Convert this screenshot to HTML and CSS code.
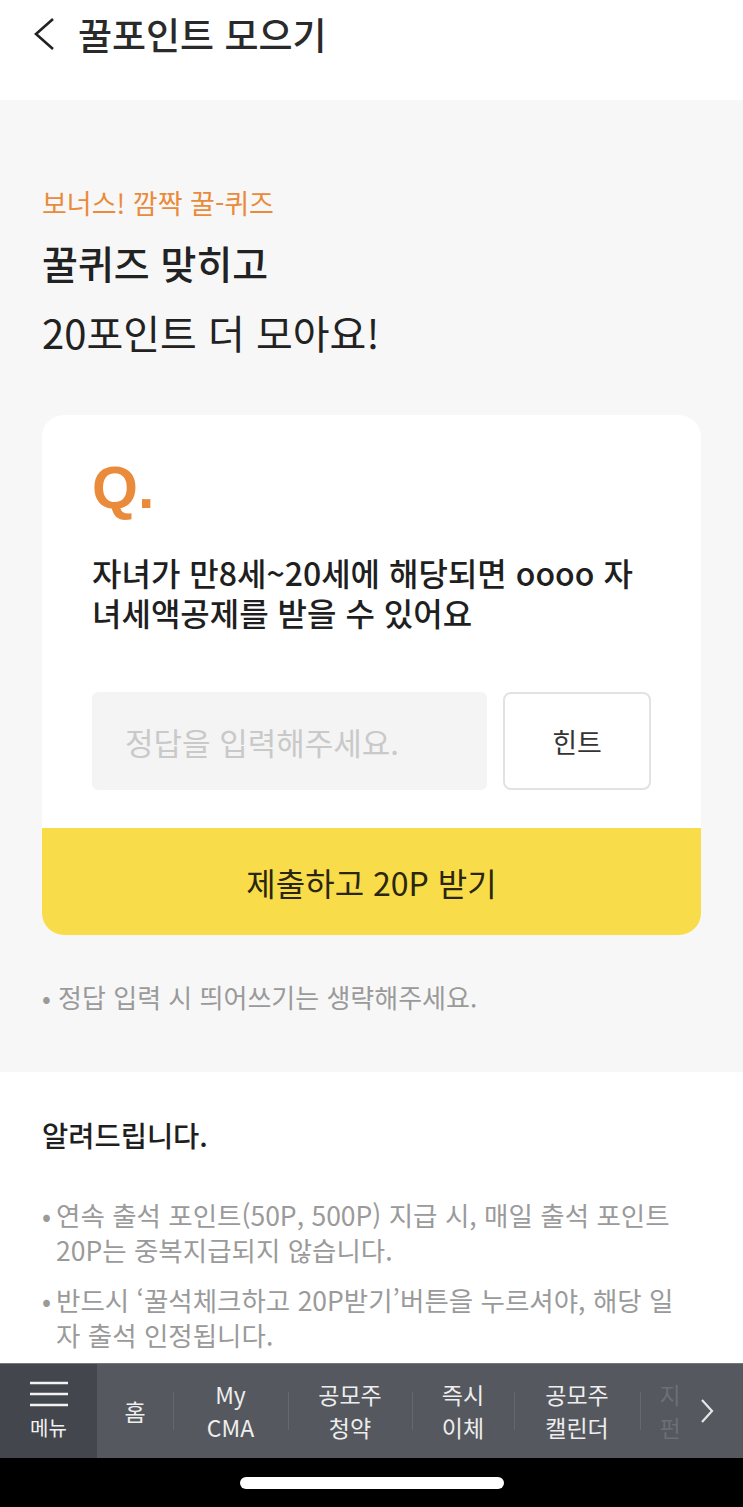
FILE: index.html
```html
<!DOCTYPE html>
<html lang="ko">
<head>
    <meta charset="UTF-8">
    <meta name="viewport" content="width=device-width, initial-scale=1.0">
    <title>꿀포인트 모으기</title>
    <link rel="stylesheet" href="styles.css">
</head>
<body>
    <div class="page">
        <header class="top-bar">
            <svg class="back" width="24" height="34" viewBox="0 0 24 34">
                <path d="M21 2 L4 17 L21 32" fill="none" stroke="#222" stroke-width="2.6"/>
            </svg>
            <h1>꿀포인트 모으기</h1>
        </header>

        <section class="quiz-section">
            <p class="eyebrow">보너스! 깜짝 꿀-퀴즈</p>
            <h2 class="headline">꿀퀴즈 맞히고</h2>
            <p class="subline">20포인트 더 모아요!</p>

            <div class="quiz-card">
                <div class="quiz-body">
                    <div class="q-mark">Q.</div>
                    <p class="question">자녀가 만8세~20세에 해당되면 oooo 자녀세액공제를 받을 수 있어요</p>
                    <div class="answer-row">
                        <div class="answer-input">정답을 입력해주세요.</div>
                        <button class="hint">힌트</button>
                    </div>
                </div>
                <button class="submit">제출하고 20P 받기</button>
            </div>

            <p class="note">• 정답 입력 시 띄어쓰기는 생략해주세요.</p>
        </section>

        <section class="notice">
            <h3>알려드립니다.</h3>
            <ul>
                <li>연속 출석 포인트(50P, 500P) 지급 시, 매일 출석 포인트 20P는 중복지급되지 않습니다.</li>
                <li>반드시 ‘꿀석체크하고 20P받기’버튼을 누르셔야, 해당 일자 출석 인정됩니다.</li>
            </ul>
        </section>
    </div>

    <nav class="bottom-nav">
        <div class="menu-btn">
            <svg width="40" height="26" viewBox="0 0 40 26">
                <path d="M1 2H39M1 13H39M1 24H39" stroke="#f2f2f2" stroke-width="2.4"/>
            </svg>
            <span>메뉴</span>
        </div>
        <div class="nav-items">
            <span class="nav-item home">홈</span>
            <span class="nav-item cma">My<br>CMA</span>
            <span class="nav-item ipo">공모주<br>청약</span>
            <span class="nav-item transfer">즉시<br>이체</span>
            <span class="nav-item calendar">공모주<br>캘린더</span>
            <span class="nav-item faded">지<br>펀</span>
        </div>
        <svg class="next" width="16" height="28" viewBox="0 0 16 28">
            <path d="M3 3 L13 14 L3 25" fill="none" stroke="#e6e6e6" stroke-width="2.2"/>
        </svg>
    </nav>
    <div class="home-bar"><span></span></div>
</body>
</html>
```

FILE: styles.css
```css
* {
    margin: 0;
    padding: 0;
    box-sizing: border-box;
}

body {
    font-family: 'Noto Sans CJK KR', 'Noto Sans', sans-serif;
    background: #f7f7f7;
    width: 743px;
    height: 1507px;
    overflow: hidden;
    display: flex;
    flex-direction: column;
    color: #222;
}

.page {
    flex: 1;
    overflow: hidden;
}

.top-bar {
    height: 100px;
    background: #fff;
    display: flex;
    align-items: center;
    padding: 0 0 32px 32px;
    gap: 22px;
}

.top-bar h1 {
    font-size: 37px;
    font-weight: 500;
    color: #2a2a2a;
}

.quiz-section {
    background: #f7f7f7;
    padding: 84px 42px 57px;
}

.eyebrow {
    color: #ea8b3c;
    font-size: 27px;
    line-height: 38px;
}

.headline {
    font-size: 39px;
    font-weight: 500;
    line-height: 50px;
    margin-top: 15px;
}

.subline {
    font-size: 40px;
    font-weight: 400;
    line-height: 50px;
    margin-top: 20px;
}

.quiz-card {
    margin-top: 58px;
    background: #fff;
    border-radius: 22px;
    overflow: hidden;
}

.quiz-body {
    padding: 42px 50px 38px;
}

.q-mark {
    color: #ea8b3c;
    font-family: 'Liberation Sans', Arial, sans-serif;
    font-size: 59px;
    font-weight: bold;
    line-height: 62px;
}

.question {
    margin-top: 33px;
    font-size: 32px;
    font-weight: 500;
    line-height: 40px;
    color: #1f1f1f;
}

.answer-row {
    margin-top: 60px;
    display: flex;
    gap: 16px;
}

.answer-input {
    flex: 1;
    height: 98px;
    background: #f4f4f4;
    border-radius: 6px;
    color: #c9c9c9;
    font-size: 31px;
    display: flex;
    align-items: center;
    padding-left: 33px;
}

.hint {
    width: 148px;
    height: 98px;
    background: #fff;
    border: 2px solid #e2e2e2;
    border-radius: 8px;
    font-family: inherit;
    font-size: 27px;
    color: #333;
}

.submit {
    display: block;
    width: 100%;
    height: 107px;
    border: none;
    background: #f8dc4a;
    font-family: inherit;
    font-size: 32px;
    font-weight: 400;
    color: #2a2610;
}

.note {
    margin-top: 44px;
    font-size: 26px;
    line-height: 36px;
    color: #9a9a9a;
}

.notice {
    background: #fff;
    padding: 43px 42px 20px;
}

.notice h3 {
    font-size: 28.5px;
    font-weight: 500;
    line-height: 40px;
    color: #1f1f1f;
}

.notice ul {
    list-style: none;
    margin-top: 42px;
}

.notice li {
    position: relative;
    padding-left: 14px;
    padding-right: 14px;
    font-size: 26.5px;
    line-height: 35px;
    color: #9a9a9a;
    margin-bottom: 15px;
}

.notice li::before {
    content: "•";
    position: absolute;
    left: 0;
    top: 0;
}

.bottom-nav {
    height: 95px;
    background: #55585e;
    border-top: 1px solid #777;
    display: flex;
    align-items: center;
}

.menu-btn {
    width: 97px;
    height: 100%;
    background: #43464c;
    display: flex;
    flex-direction: column;
    align-items: center;
    justify-content: center;
    gap: 6px;
    color: #f2f2f2;
    font-size: 20px;
}

.nav-items {
    flex: 1;
    height: 100%;
    display: flex;
    align-items: center;
    overflow: hidden;
}

.nav-item {
    position: relative;
    flex-shrink: 0;
    color: #eeeeee;
    font-size: 23px;
    line-height: 33px;
    text-align: center;
}

.nav-item + .nav-item::before {
    content: "";
    position: absolute;
    left: 0;
    top: 50%;
    width: 1px;
    height: 38px;
    margin-top: -19px;
    background: #65686e;
}

.nav-item.home { width: 76px; }
.nav-item.cma { width: 115px; }
.nav-item.ipo { width: 124px; }
.nav-item.transfer { width: 102px; }
.nav-item.calendar { width: 126px; }
.nav-item.faded {
    width: 60px;
    color: #6c6f75;
}

.next {
    margin: 0 28px 0 3px;
}

.home-bar {
    height: 49px;
    background: #000;
    display: flex;
    justify-content: center;
    align-items: center;
}

.home-bar span {
    width: 264px;
    height: 12px;
    border-radius: 6px;
    background: #fff;
}
```
